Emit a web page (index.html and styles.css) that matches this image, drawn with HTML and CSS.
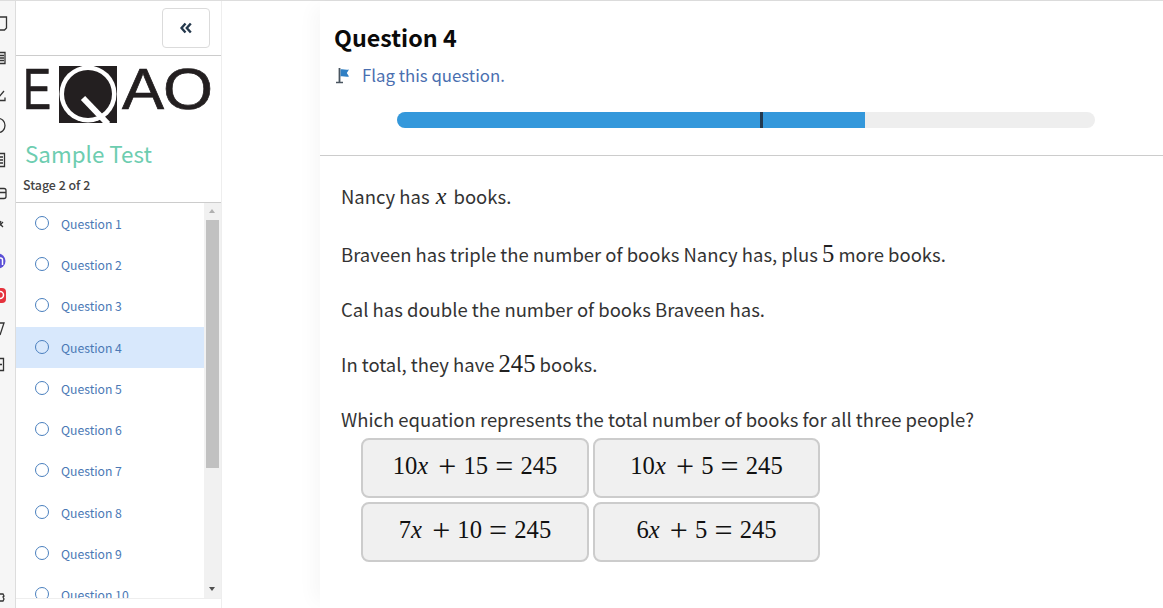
FILE: index.html
```html
<!DOCTYPE html>
<html lang="en">
<head>
<meta charset="utf-8">
<title>Question 4</title>
<link rel="stylesheet" href="styles.css">
</head>
<body>
<div class="page">
  <aside class="rail">
    <svg class="rail-icons" width="15" height="607" viewBox="0 1 15 607" aria-hidden="true">
      <g fill="none" stroke="#333" stroke-width="1.3">
        <path d="M-4 17h10.500v11l-2 2H-4"/>
        <path d="M-4 52.500h9v11h-9M-1 55.500h5M-1 58h5M-1 60.500h5"/>
        <path d="M-2 98l6-7M-3 100.500h8v-3"/>
        <path d="M-3 118.500c5-.5 8 3 8 7s-3 7.500-8 7"/>
        <path d="M-4 153.500h8.500v13h-8.500M-1 157h4M-1 160h4M-1 163h4"/>
        <path d="M-4 188.500h8a2 2 0 0 1 2 2v6a2 2 0 0 1-2 2h-8M-4 192.500h10"/>
        <path d="M-2 222l5 5M3 222l-5 5M1 221l-1 2"/>
        <path d="M-1 323h5l-4 12"/>
        <path d="M-3 358.500h6.500v12h-6.500M0 364.500h2"/>
        <path d="M-1 594h4l1 2-1 1 1 2-1 2h-4"/>
      </g>
      <circle cx="-2" cy="261" r="7.500" fill="#5b4fd6"/>
      <path d="M-2 265v-7h2.500a2 2 0 0 1 2 2V265" fill="none" stroke="#fff" stroke-width="1.500"/>
      <rect x="-8" y="288" width="14" height="15" rx="4" fill="#e5333d"/>
      <circle cx="0" cy="295" r="3.500" fill="none" stroke="#fff" stroke-width="1.500"/>
    </svg>
  </aside>
  <nav class="sidebar">
    <div class="collapse-row"><button class="collapse" aria-label="Collapse">
      <svg width="12" height="12" viewBox="0 0 12 12"><path d="M5.500 1.500 1.500 6l4 4.500M10.800 1.500 6.800 6l4 4.500" fill="none" stroke="#24384c" stroke-width="2.400"/></svg>
    </button></div>
    <div class="brand">
      <svg class="logo" width="205" height="70" viewBox="0 0 205 70" role="img" aria-label="EQAO">
        <text class="logo-letter" x="7" y="53" textLength="28" lengthAdjust="spacingAndGlyphs">E</text>
        <rect x="43" y="10" width="58" height="57" fill="#231f20"/>
        <circle cx="72" cy="38" r="28.500" fill="#fff"/>
        <circle cx="72" cy="38" r="24" fill="#231f20"/>
        <path d="M67 42 92 68" stroke="#fff" stroke-width="6"/>
        <text class="logo-letter" x="106" y="53" textLength="42" lengthAdjust="spacingAndGlyphs">A</text>
        <text class="logo-letter" x="147" y="53" textLength="50" lengthAdjust="spacingAndGlyphs">O</text>
      </svg>
      <h2 class="test-name">Sample Test</h2>
      <div class="stage">Stage 2 of 2</div>
    </div>
    <div class="list-wrap">
      <ul class="questions">
        <li><span class="dot"></span>Question 1</li>
        <li><span class="dot"></span>Question 2</li>
        <li><span class="dot"></span>Question 3</li>
        <li class="current"><span class="dot"></span>Question 4</li>
        <li><span class="dot"></span>Question 5</li>
        <li><span class="dot"></span>Question 6</li>
        <li><span class="dot"></span>Question 7</li>
        <li><span class="dot"></span>Question 8</li>
        <li><span class="dot"></span>Question 9</li>
        <li><span class="dot"></span>Question 10</li>
      </ul>
      <div class="scrollbar"><span class="arrow-up"></span><span class="thumb"></span><span class="arrow-down"></span></div>
    </div>
  </nav>
  <div class="gutter"></div>
  <main class="content">
    <header class="head">
      <h1>Question 4</h1>
      <a class="flag">
        <svg width="16" height="17" viewBox="0 0 16 17" aria-hidden="true"><path d="M4.500 1v14" stroke="#4a5560" stroke-width="1.800"/><path d="M1 15.500h7" stroke="#4a5560" stroke-width="1.500"/><path d="M5.500 2.500c2.500-.8 5 .8 8.500 0L11.800 6l2.200 3.500c-3 .8-6-.6-8.500 0z" fill="#2f7fc4"/></svg>
        <span>Flag this question.</span>
      </a>
      <div class="progress"><div class="fill"></div><span class="tick"></span></div>
    </header>
    <section class="body">
      <p>Nancy has <i class="m mx">x</i> books.</p>
      <p>Braveen has triple the number of books Nancy has, plus <span class="m">5</span> more books.</p>
      <p>Cal has double the number of books Braveen has.</p>
      <p>In total, they have <span class="m">245</span> books.</p>
      <p>Which equation represents the total number of books for all three people?</p>
      <div class="answers">
        <div class="answer"><span class="eq">10<i>x</i> <span class="op">+</span> 15 <span class="op">=</span> 245</span></div>
        <div class="answer"><span class="eq">10<i>x</i> <span class="op">+</span> 5 <span class="op">=</span> 245</span></div>
        <div class="answer"><span class="eq">7<i>x</i> <span class="op">+</span> 10 <span class="op">=</span> 245</span></div>
        <div class="answer"><span class="eq">6<i>x</i> <span class="op">+</span> 5 <span class="op">=</span> 245</span></div>
      </div>
    </section>
  </main>
</div>
</body>
</html>
```
FILE: styles.css
```css
* { box-sizing: border-box; }
html, body { margin: 0; height: 100%; }
body { font-family: "Noto Sans CJK SC", "Noto Sans", sans-serif; background: #fff; color: #333; overflow: hidden; }
.page { display: flex; height: 608px; border-top: 1px solid #ddd; }
.rail { width: 16px; flex: none; background: #f6f6f6; border-right: 1px solid #ddd; overflow: hidden; }
.rail-icons { display: block; }
.sidebar { width: 206px; flex: none; border-right: 1px solid #eee; display: flex; flex-direction: column; }
.collapse-row { height: 55px; flex: none; display: flex; justify-content: flex-end; padding: 7px 11px 0 0; border-bottom: 1px solid #ccc; }
.collapse { width: 48px; height: 40px; background: #fff; border: 1px solid #dbdbdb; border-radius: 4px; padding: 0; display: flex; align-items: center; justify-content: center; }
.brand { height: 147px; flex: none; border-bottom: 1px solid #ccc; }
.logo { display: block; }
.logo-letter { font-family: "Liberation Sans", sans-serif; font-size: 58px; fill: #231f20; stroke: #231f20; stroke-width: .7px; }
.test-name { margin: 11px 0 0 9px; font-size: 22.4px; line-height: 32px; font-weight: 400; color: #6dcdb0; }
.stage { margin: 6px 0 0 7px; font-size: 12.4px; line-height: 20px; font-weight: 500; color: #444; }
.list-wrap { height: 396px; flex: none; display: flex; overflow: hidden; border-bottom: 1px solid #eee; }
.questions { list-style: none; margin: 0; padding: 0; width: 188px; flex: none; }
.questions li { height: 41.3px; display: flex; align-items: center; font-size: 12.2px; color: #4a78b5; padding-left: 19px; }
.questions li.current { background: #d8e8fc; }
.dot { width: 14px; height: 14px; flex: none; border: 1.6px solid #4a7fbe; border-radius: 50%; margin: -2px 12px 0 0; }
.scrollbar { width: 17px; flex: none; background: #f1f1f1; position: relative; }
.thumb { position: absolute; left: 2px; top: 17px; width: 13px; height: 248px; background: #c1c1c1; }
.arrow-up, .arrow-down { position: absolute; left: 5px; width: 0; height: 0; border-left: 3.5px solid transparent; border-right: 3.5px solid transparent; }
.arrow-up { top: 6px; border-bottom: 4px solid #b0b0b0; }
.arrow-down { bottom: 7px; border-top: 4px solid #505050; }
.gutter { width: 98px; flex: none; }
.content { flex: 1; min-width: 0; box-shadow: -12px 0 18px -6px rgba(0, 0, 0, .035); }
.head { height: 155px; border-bottom: 1px solid #ccc; padding: 21px 14px 0; }
h1 { margin: 0; font-size: 23.3px; line-height: 30px; font-weight: 600; color: #0a0a0a; }
.flag { display: flex; align-items: center; gap: 11px; margin: 11px 0 0 1px; color: #4a6fb0; font-size: 16.8px; line-height: 24px; }
.progress { position: relative; margin: 25px 0 0 63px; width: 698px; height: 16px; background: #eee; border-radius: 8px; overflow: hidden; }
.fill { width: 468px; height: 16px; background: #3498db; }
.tick { position: absolute; left: 363px; top: 0; width: 3px; height: 16px; background: #223a50; }
.body { padding: 27px 21px 0; font-size: 18.48px; line-height: 27px; color: #333; }
.body p { margin: 0 0 28px; }
.body p:first-child { margin-bottom: 31px; }
.body p:nth-child(5) { margin-bottom: 5px; }
.m { font-family: "Liberation Serif", serif; font-size: 24.6px; line-height: 20px; color: #222; }
.mx { margin: 0 3px 0 2px; font-size: 24px; }
.answers { display: grid; grid-template-columns: 228px 227px; gap: 4px; margin-left: 20px; }
.answer { height: 60px; padding-bottom: 4px; border: 2px solid #ccc; border-radius: 8px; background: #f0f0f0; display: flex; align-items: center; justify-content: center; font-family: "Liberation Serif", serif; font-size: 24.6px; line-height: 30px; white-space: pre; word-spacing: 1px; color: #111; }
.answer i { margin-right: 3px; }
.op { font-size: 32px; line-height: 0; vertical-align: -2.5px; }
```
